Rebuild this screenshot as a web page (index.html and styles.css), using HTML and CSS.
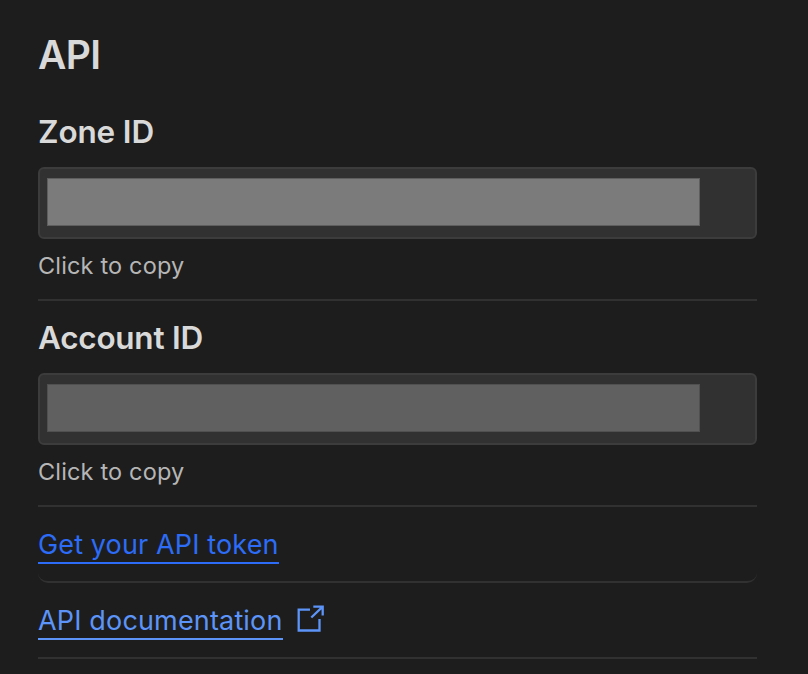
FILE: index.html
```html
<!DOCTYPE html>
<html lang="en">
<head>
<meta charset="utf-8">
<title>API</title>
<link rel="stylesheet" href="styles.css">
</head>
<body>
<main class="panel">
  <h1 class="title">API</h1>
  <section class="field">
    <h2 class="label">Zone ID</h2>
    <div class="input"><div class="mask mask-light"></div></div>
    <p class="hint">Click to copy</p>
  </section>
  <section class="field">
    <h2 class="label label-account">Account ID</h2>
    <div class="input"><div class="mask"></div></div>
    <p class="hint">Click to copy</p>
  </section>
  <div class="row row-token"><a class="link link-token">Get your API token</a></div>
  <div class="row"><a class="link link-docs">API documentation</a>
    <svg class="icon" width="28" height="28" viewBox="0 0 28 28" fill="none" stroke="currentColor" stroke-width="2.3"><path d="M13 4.700H1.700V25.500H22.500V14M16.300 1.700H25.700V10.500M25.700 1.700L14.300 12.500"/></svg>
  </div>
</main>
</body>
</html>
```

FILE: styles.css
```css
* { box-sizing: border-box; }
body { margin: 0; background: #1d1d1d; color: #d9d9d9; font-family: Inter, sans-serif; }
.panel { width: 757px; padding: 31px 0 0 38px; }
.title { margin: 0; font-size: 39px; line-height: 48px; font-weight: 600; letter-spacing: -.7px; }
.field { height: 206px; border-bottom: 2px solid #313131; padding-top: 16px; }
.title + .field { height: 222px; padding-top: 32px; }
.label { margin: 0 0 14px; font-size: 31.500px; line-height: 42px; font-weight: 600; letter-spacing: -.15px; }
.label-account { letter-spacing: -.25px; }
.input { height: 72px; border: 2px solid #3c3c3c; border-radius: 6px; background: #313131; padding: 9px 7px; }
.mask { width: 653px; height: 48px; background: #606060; border: 1px solid #505050; }
.mask-light { background: #7b7b7b; border-color: #5e5e5e; }
.hint { margin: 11px 0 0; font-size: 23.500px; line-height: 32px; letter-spacing: .16px; color: #b6b6b6; }
.row { height: 76px; border-bottom: 2px solid #313131; display: flex; padding-top: 18px; }
.row-token { border-radius: 0 0 10px 10px; }
.link { height: 39px; font-size: 27px; line-height: 39px; letter-spacing: .13px; border-bottom: 2px solid currentColor; }
.link-token { color: #2c6cf6; }
.link-docs { color: #5c94f8; letter-spacing: .16px; }
.icon { margin: 4px 0 0 14px; color: #5c94f8; }
```
